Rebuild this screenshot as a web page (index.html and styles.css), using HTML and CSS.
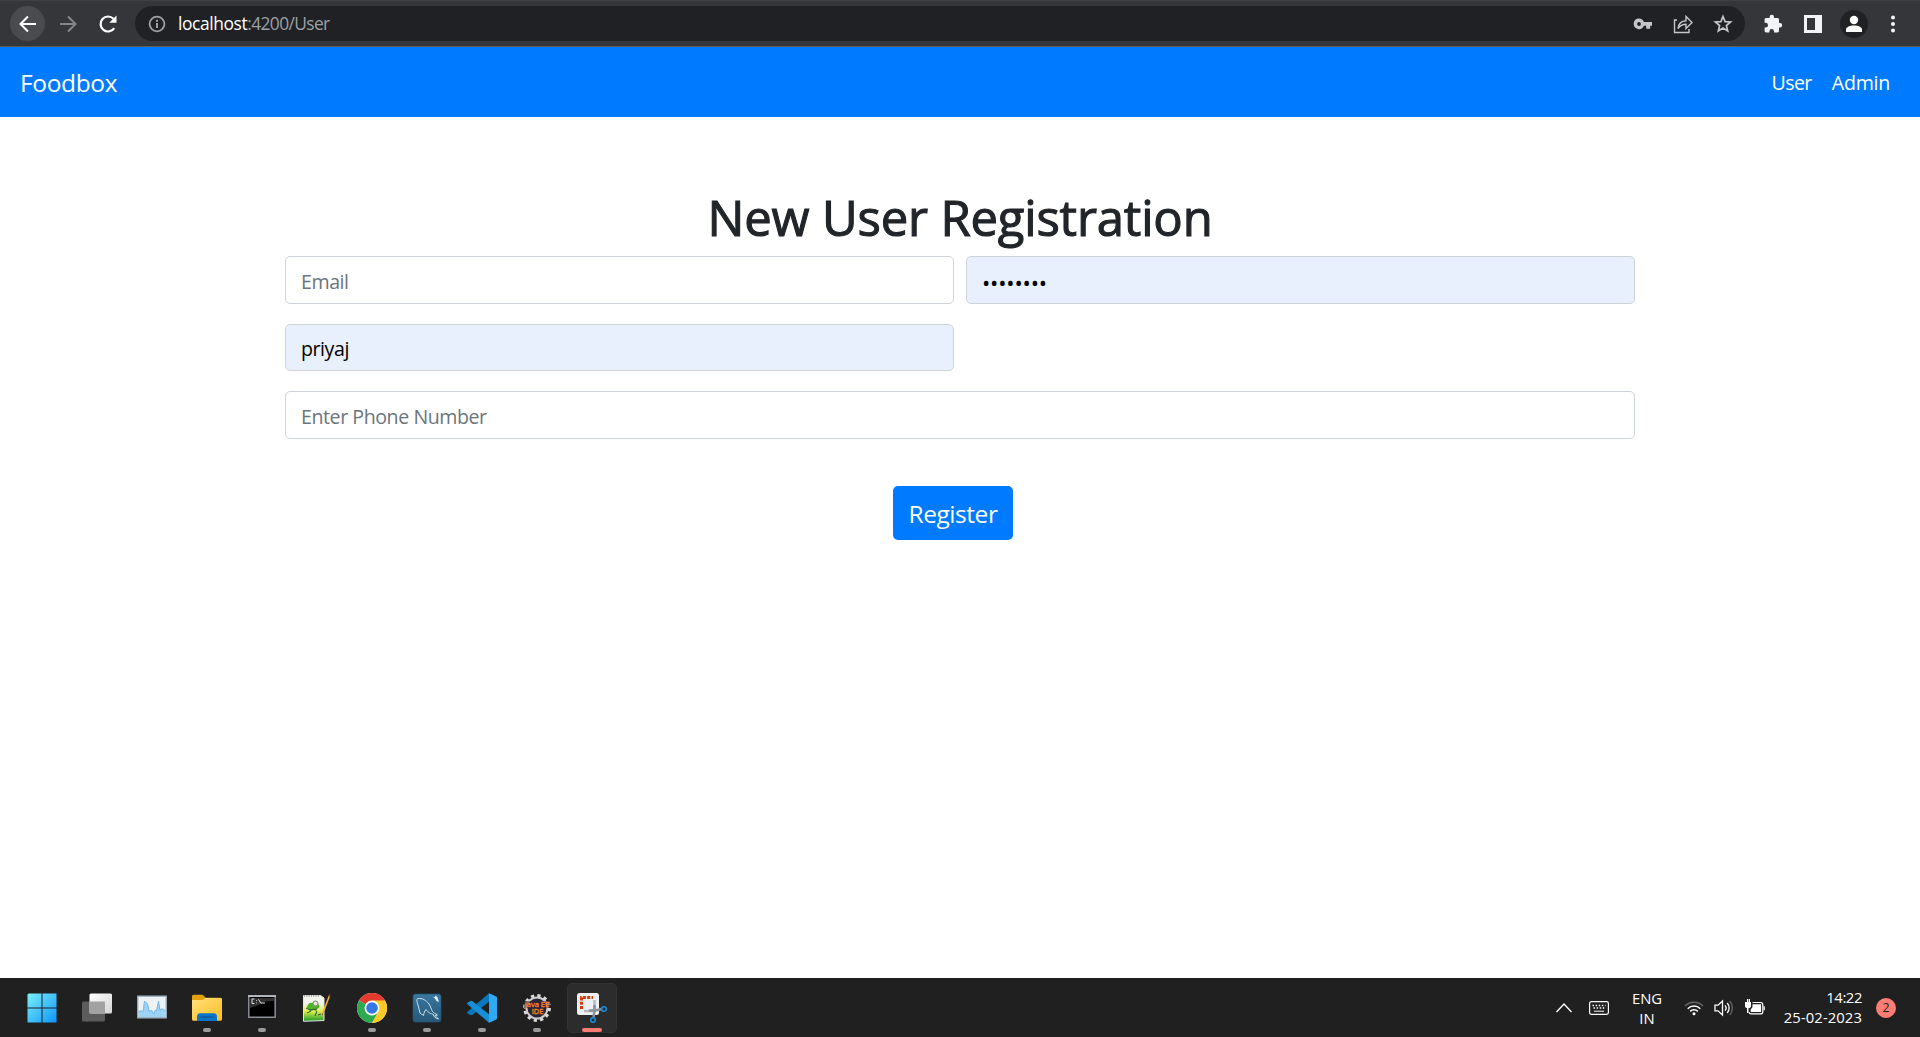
FILE: index.html
```
<!DOCTYPE html>
<html lang="en">
<head>
<meta charset="utf-8">
<title>Foodbox</title>
<link rel="stylesheet" href="styles.css">
</head>
<body>
<div class="screen">
  <header class="toolbar">
    <span class="tool tool-back"><svg width="20" height="20" viewBox="0 0 20 20" fill="none" stroke="#fff" stroke-width="2"><path d="M18 10H3M10 2.5 2.5 10l7.500 7.500"/></svg></span>
    <span class="tool"><svg width="20" height="20" viewBox="0 0 20 20" fill="none" stroke="#85868a" stroke-width="2"><path d="M2 10h15M10 2.500 17.500 10 10 17.500"/></svg></span>
    <span class="tool"><svg width="20" height="20" viewBox="0 0 20 20"><path d="M16.300 14.200A7.500 7.500 0 1 1 15.500 4.800" fill="none" stroke="#fff" stroke-width="2.200"/><path d="M18.500 1.500v7.200h-7.200z" fill="#fff"/></svg></span>
    <div class="omnibox">
      <svg class="info" width="18" height="18" viewBox="0 0 18 18" fill="none" stroke="#9aa0a6" stroke-width="1.800"><circle cx="9" cy="9" r="7.400"/><path d="M9 8v5M9 4.800v1.900" stroke-width="2"/></svg>
      <span class="url"><span class="host">localhost</span>:4200/User</span>
      <div class="omni-actions">
        <svg width="20" height="20" viewBox="0 0 20 20"><path d="M6 4.500a5.300 5.300 0 1 0 4.900 7.300h2.300v3h4v-3H19V8h-8.100A5.300 5.300 0 0 0 6 4.500zm0 3.600a1.900 1.900 0 1 1 0 3.800 1.900 1.900 0 0 1 0-3.800z" fill="#c4c6c9"/></svg>
        <svg width="20" height="20" viewBox="0 0 20 20" fill="none" stroke="#c4c6c9" stroke-width="1.400"><path d="M4 6H1.500v12.500H16V15"/><path d="M5 14.500c.5-4.800 3.500-7.500 8-7.800V2.500l6 6-6 6v-4.200c-3.500 0-6 1.300-8 4.200z"/></svg>
        <svg width="20" height="20" viewBox="0 0 20 20" fill="none" stroke="#c4c6c9" stroke-width="1.700"><path d="m10 2.500 2.100 5.100 5.500.4-4.200 3.600 1.300 5.400L10 14.100 5.300 17l1.300-5.400L2.400 8l5.500-.4z"/></svg>
      </div>
    </div>
    <div class="browser-actions">
      <svg width="20" height="20" viewBox="0 0 20 20" fill="#f1f3f4"><path d="M17 9h-1V5.600C16 4.700 15.300 4 14.400 4H11V3a2.200 2.200 0 0 0-4.400 0v1H3.200c-.9 0-1.600.7-1.600 1.600v3.200h1a2.400 2.400 0 0 1 0 4.800h-1v3.200c0 .9.700 1.600 1.600 1.600h3.200v-1a2.300 2.300 0 0 1 4.600 0v1h3.400c.9 0 1.600-.7 1.600-1.600v-3.400h1A2.200 2.200 0 0 0 17 9z"/></svg>
      <svg width="20" height="20" viewBox="0 0 20 20"><path fill-rule="evenodd" d="M1 1h18v18H1zM4 4v12h8V4z" fill="#f1f3f4"/></svg>
      <svg width="28" height="28" viewBox="0 0 28 28"><circle cx="14" cy="14" r="14" fill="#202124"/><circle cx="14" cy="10" r="4.200" fill="#fff"/><path d="M6 22v-2.500c0-2.500 4-4 8-4s8 1.500 8 4V22z" fill="#fff"/></svg>
      <svg width="20" height="20" viewBox="0 0 20 20" fill="#f1f3f4"><circle cx="10" cy="3.500" r="2"/><circle cx="10" cy="10" r="2"/><circle cx="10" cy="16.500" r="2"/></svg>
    </div>
  </header>

  <nav class="navbar">
    <a class="brand">Foodbox</a>
    <div class="links"><a class="link-user">User</a><a>Admin</a></div>
  </nav>

  <main class="page">
    <form class="form">
      <h1 class="title">New User Registration</h1>
      <div class="fields">
        <div class="field"><span class="placeholder">Email</span></div>
        <div class="field filled"><span class="password">••••••••</span></div>
        <div class="field filled"><span class="value">priyaj</span></div>
        <div class="field wide"><span class="placeholder">Enter Phone Number</span></div>
      </div>
      <div class="register"><span>Register</span></div>
    </form>
  </main>

  <footer class="taskbar">
    <div class="apps">
      <div class="app"><svg width="30" height="30" viewBox="0 0 30 30"><defs><linearGradient id="win" x1="0" y1="0" x2="30" y2="30" gradientUnits="userSpaceOnUse"><stop stop-color="#7cf2fd"/><stop offset=".5" stop-color="#43c2fb"/><stop offset="1" stop-color="#0b93fa"/></linearGradient></defs><path d="M1.500.5H14.500v14H.5v-13zM15.500.5h14v14h-14zM.5 15.500h14v14H.5zM15.500 15.500h14v14h-14z" fill="url(#win)"/></svg></div>
      <div class="app"><svg width="32" height="30" viewBox="0 0 32 30"><defs><linearGradient id="tv" x1="0" y1="0" x2="1" y2="1"><stop stop-color="#fff"/><stop offset="1" stop-color="#d5d5d5"/></linearGradient></defs><rect x="1" y="8.500" width="23" height="20" rx="1.500" fill="#5c5c5c"/><rect x="8.500" y=".5" width="22.500" height="20" rx="1.500" fill="url(#tv)"/><path d="M8.500 8.500H24v12H8.500z" fill="#a2a2a2"/></svg></div>
      <div class="app"><svg width="30" height="30" viewBox="0 0 30 30"><path d="M.8 3.300h28.400v21.400H.8z" fill="#eef2f5" stroke="#9fb2c0" stroke-width="1.400"/><path d="M1.500 19 4 17.500l2 1.500 1.500-11 3 3 2 8 2-2 2 4 2-4 1 1L21.500 8l1.500 9 2.500-1 3 2v6h-27z" fill="#9dd3f5"/><path d="m1.500 19 2.500-1.500 2 1.500 1.500-11 3 3 2 8 2-2 2 4 2-4 1 1L21.500 8l1.500 9 2.500-1 3 2" fill="none" stroke="#6db9ea" stroke-width="1"/></svg></div>
      <div class="app running"><svg width="30" height="30" viewBox="0 0 30 30"><defs><linearGradient id="fold" x1="0" y1="0" x2="1" y2="1"><stop stop-color="#ffe07b"/><stop offset="1" stop-color="#fdbd22"/></linearGradient></defs><path d="M0 3.500C0 2.500.7 1.700 1.700 1.700h9l3 3h14.600c1 0 1.700.8 1.700 1.700V16H0z" fill="#e3a008"/><path d="M0 7h11l2-2h15.500c.8 0 1.500.7 1.500 1.500v19.700c0 .8-.7 1.500-1.500 1.500h-27c-.8 0-1.500-.7-1.500-1.500z" fill="url(#fold)"/><path d="M5 28v-4.500c0-2 1.200-3.300 3-3.300h14c1.800 0 3 1.300 3 3.300V28z" fill="#0b76c7"/><path d="M9 24h12" stroke="#064b86" stroke-width="1.200" stroke-linecap="round"/></svg></div>
      <div class="app running"><svg width="30" height="30" viewBox="0 0 30 30"><path d="M1.800 3.300h26.400v20.900H1.800z" fill="#000" stroke="#8a9096" stroke-width="1.500"/><path d="M1 3h28" stroke="#c6ccd0" stroke-width="1.500"/><path d="M3 5h24v3c-7 0-13 1-15 4l-9 3z" fill="#303030"/><path d="M7.500 6H5v4.500h2.500M9.500 7v.8M9.500 9.500v.8M11.500 6.200l2.500 4.300M14 10h4" fill="none" stroke="#ddd" stroke-width="1"/></svg></div>
      <div class="app"><svg width="30" height="30" viewBox="0 0 30 30"><defs><linearGradient id="npp" x1="0" y1="0" x2="0" y2="1"><stop offset=".3" stop-color="#f4f6ed"/><stop offset=".62" stop-color="#dceb4f"/><stop offset="1" stop-color="#149c25"/></linearGradient></defs><path d="M1.500 2.500h17L22 5v22.500l-20.500.8z" fill="url(#npp)" stroke="#e5e8e5" stroke-width="1"/><path d="M2 3h16" stroke="#888" stroke-width="1.500" stroke-dasharray="1 1.300"/><path d="M5 15c0-4 3-6 6-5 1-3 6-2 5 1 3 2 1 5-2 5l1 3-3-2-4 1-1-2z" fill="#50b32b"/><circle cx="13.500" cy="10.500" r="2.500" fill="#e5e7df" stroke="#778269"/><path d="m4 15 4 2 7-1M5 20l4-2m4 5 2-5m1 4 3-1" stroke="#26582b" fill="none"/><path d="m20 20 6.500-17 1.500.6-6.500 17-1.500 1.400z" fill="#f6b51e"/><path d="m26.300 3 .8-1.800 1.600.6L28 3.600z" fill="#943b32"/><path d="m20 20.500 0 2 1.500-1.600z" fill="#624b29"/></svg></div>
      <div class="app running"><svg width="30" height="30" viewBox="0 0 30 30"><circle cx="15" cy="15" r="15" fill="#fff"/><path d="M15 15 2 7.500a15 15 0 0 1 26 0z" fill="#e33b2e"/><path d="M15 15 2 7.500A15 15 0 0 0 15 30l6.500-11.200z" fill="#2da94f"/><path d="M15 7.500h13A15 15 0 0 1 15 30l6.500-11.200z" fill="#fdc922"/><circle cx="15" cy="15" r="7.500" fill="#fff"/><circle cx="15" cy="15" r="5.800" fill="#3478e5"/></svg></div>
      <div class="app running"><svg width="30" height="30" viewBox="0 0 30 30"><defs><linearGradient id="sql" x1="0" y1="0" x2="0" y2="1"><stop stop-color="#3977a1"/><stop offset="1" stop-color="#275979"/></linearGradient></defs><rect x="1" y="1" width="28" height="28" rx="2.500" fill="url(#sql)" stroke="#235675" stroke-width=".7"/><path d="M8 20c-1-3-1-5-2-8S4 6 6 5.500c4-.5 8 1.500 11 5.500 2 3 2 5 3.500 7.500 1 1.500 3 2 5 3.500l-2.500.5 3.500 3.500c-3-.5-4.500-2-5.500-5-2 0-4.500-1-7-4.500-1.500 2-2 3-2.500 6-1-1-2-1-3.500-2.500z" fill="none" stroke="#d0e1ea" stroke-width="1"/><path d="m20.500 3.500 2 .8L24 2.500l1.500 2 1.500 4.500-2.500-1-1.500-2.500z" fill="#e5f0f5"/></svg></div>
      <div class="app running"><svg width="30" height="30" viewBox="0 0 30 30"><path d="M22 .2 29 3.500c.6.300 1 .8 1 1.500L22 8.700 5.200 22 3.700 22.200.5 20.300c-.5-.4-.5-1.200 0-1.600z" fill="#0878be"/><path d="M22 29.800 29 26.500c.6-.3 1-.8 1-1.500L22 21.300 5.200 8 3.700 7.800.5 9.700c-.5.400-.5 1.200 0 1.600z" fill="#168fd8"/><path d="M22 .2c.2.300 0 .8 0 1.300v27c0 .5.200 1 0 1.300L29 26.500c.6-.3 1-.8 1-1.500V5c0-.7-.4-1.200-1-1.500z" fill="#30a9f3"/></svg></div>
      <div class="app running"><svg width="30" height="30" viewBox="0 0 30 30"><circle cx="15" cy="15" r="12.300" fill="none" stroke="#dcdcdc" stroke-width="3.200" stroke-dasharray="3.200 3.240"/><circle cx="15" cy="15" r="10.500" fill="#292536" stroke="#cecece" stroke-width="2"/><path d="M2 8h26v7H2z" fill="#292536" opacity=".55"/><text x="15" y="14" text-anchor="middle" class="ide">Java EE</text><text x="15.500" y="20.500" text-anchor="middle" class="ide">IDE</text></svg></div>
      <div class="app active"><svg width="30" height="30" viewBox="0 0 30 30"><rect x="0" y="0" width="22" height="22" rx="2.500" fill="#eef1f4"/><path d="M4.500 16V4.500H16" fill="none" stroke="#d83b09" stroke-width="3" stroke-dasharray="3 1.300"/><path d="M17.500 7v11H7" fill="none" stroke="#b6bbc0" stroke-width="2.500"/><path d="M17.500 12v5.500L16.500 24M12 17.500h6L25 16" fill="none" stroke="#899199" stroke-width="2.500"/><circle cx="27" cy="16" r="2.300" fill="none" stroke="#168ddd" stroke-width="1.600"/><circle cx="16" cy="27" r="2.300" fill="none" stroke="#168ddd" stroke-width="1.600"/></svg></div>
    </div>
    <div class="tray">
      <svg class="chevron" width="18" height="18" viewBox="0 0 18 18" fill="none" stroke="#fff" stroke-width="1.300"><path d="m1.500 13 7.500-8 7.500 8"/></svg>
      <svg class="keyboard" width="20" height="14" viewBox="0 0 20 14" fill="none" stroke="#fff"><rect x=".6" y=".6" width="18.800" height="12.800" rx="1.800" stroke-width="1.200"/><path d="M3.500 4.500h13M4.500 7h12" stroke-width="1.400" stroke-dasharray="1.500 1.600"/><path d="M5 10.200h10"/></svg>
      <div class="lang"><span>ENG</span><span>IN</span></div>
      <div class="status">
        <svg width="20" height="18" viewBox="0 0 20 18" fill="none" stroke="#fff" stroke-width="1.500"><path d="M1 7a12.700 12.700 0 0 1 18 0" stroke="#66676a"/><path d="M3.700 9.700a8.900 8.900 0 0 1 12.600 0M6.200 12.400a5.400 5.400 0 0 1 7.600 0"/><circle cx="10" cy="14.800" r="1.500" fill="#fff" stroke="none"/></svg>
        <svg width="20" height="18" viewBox="0 0 20 18" fill="none" stroke="#fff" stroke-width="1.300"><path d="M1 6.200h3L8.500 2v14L4 11.800H1z"/><path d="M11 6.300a4.200 4.200 0 0 1 0 5.400M13.200 4a7.500 7.500 0 0 1 0 10"/><path d="M15.700 2a10.500 10.500 0 0 1 0 14" stroke="#66676a"/></svg>
        <svg width="22" height="18" viewBox="0 0 22 18"><path d="M3 0v3H1v4c0 1.500 1 2 2 2v5h1.500V9c1.300 0 2.500-.6 2.500-2V3H6V0H4.800v3h-.6V0z" fill="#fff"/><path d="M8.500 3.500h8c1.300 0 2.300 1 2.300 2.200v7c0 1.200-1 2.200-2.300 2.200H7c-1 0-1.800-.6-2-1.700" fill="none" stroke="#fff" stroke-width="1.200"/><path d="M8.500 5.300h8.600v7.800H6.700V10c1.200-.5 1.800-1.500 1.800-3z" fill="#fff"/><path d="M19.500 7.200h1.300v4h-1.300z" fill="#fff"/></svg>
      </div>
      <div class="clock"><span class="time">14:22</span><span class="date">25-02-2023</span></div>
      <span class="badge">2</span>
    </div>
  </footer>
</div>
</body>
</html>
```
FILE: styles.css
```
* { box-sizing: border-box; }
body { margin: 0; font-family: "Open Sans", "Noto Sans", sans-serif; background: #fff; }
svg { display: block; flex: none; }

.screen { display: flex; flex-direction: column; height: 1037px; width: 1920px; overflow: hidden; }

/* Browser toolbar */
.toolbar { flex: none; display: flex; align-items: center; height: 47px; padding: 0 0 0 10px; background: #35363a; border-bottom: 1px solid #5b5c5f; border-top: 1px solid #3f4044; }
.tool { flex: none; display: flex; align-items: center; justify-content: center; width: 35px; height: 35px; margin-right: 5px; border-radius: 50%; }
.tool-back { background: #4a4b4f; }
.omnibox { flex: none; display: flex; align-items: center; width: 1610px; height: 35px; margin-left: 5px; padding: 0 12px 0 13px; border-radius: 18px; background: #202124; }
.info { margin-right: 12px; }
.url { font-size: 17.4px; letter-spacing: -0.62px; color: #9aa0a6; line-height: 35px; }
.host { color: #fff; letter-spacing: -0.4px; }
.omni-actions { display: flex; gap: 20px; margin-left: auto; }
.browser-actions { display: flex; align-items: center; margin-left: 18px; }
.browser-actions svg:nth-child(2) { margin-left: 20px; }
.browser-actions svg:nth-child(3) { margin-left: 17px; }
.browser-actions svg:nth-child(4) { margin-left: 15px; }

/* Site navigation */
.navbar { flex: none; display: flex; align-items: center; justify-content: space-between; height: 70px; padding: 0 30px 0 20px; background: #007bff; color: #fff; }
.brand { font-size: 24.5px; letter-spacing: -0.35px; }
.links { display: flex; gap: 20px; font-size: 19.6px; letter-spacing: -0.25px; }
.link-user { letter-spacing: -0.6px; }

/* Registration form */
.page { flex: 1; padding-top: 69px; }
.form { width: 1350px; margin: 0 auto; }
.title { margin: 0 0 10px; padding-top: 1px; height: 60px; font-size: 49px; font-weight: 500; letter-spacing: -0.17px; line-height: 60px; text-align: center; color: #212529; -webkit-text-stroke: 1.1px #212529; }
.fields { display: grid; grid-template-columns: 1fr 1fr; gap: 20px 12px; }
.field { display: flex; align-items: center; height: 47.5px; padding: 3px 15px 0; border: 1px solid #ced4da; border-radius: 5px; font-size: 19.6px; letter-spacing: -0.44px; background: #fff; }
.filled { background: #e8f0fe; color: #000; }
.wide { grid-column: 1 / -1; }
.placeholder { color: #6c757d; }
.password { padding-top: 2px; font-size: 22px; letter-spacing: -0.15px; }
.register { display: flex; align-items: center; justify-content: center; width: 120px; height: 54px; margin: 47px 0 0 608px; padding-top: 2px; border-radius: 5px; background: #007bff; color: #fff; font-size: 24.5px; letter-spacing: -0.45px; }

/* Taskbar */
.taskbar { flex: none; display: flex; align-items: center; justify-content: space-between; height: 59px; padding: 0 24px 0 17px; background: #202021; color: #fff; }
.apps { display: flex; gap: 5px; }
.app { position: relative; display: flex; align-items: center; justify-content: center; width: 50px; height: 50px; border-radius: 5px; }
.running::after, .active::after { content: ""; position: absolute; bottom: 1px; width: 8px; height: 4px; border-radius: 2px; background: #9b9b9b; }
.active { background: #2c2c2d; border: 1px solid #333; }
.active::after { bottom: 0; width: 20px; background: #ff7d72; }
.ide { font: 7.5px "Open Sans", sans-serif; fill: #f0821e; stroke: #f0821e; stroke-width: .35px; }
.tray { display: flex; align-items: center; font-size: 14.8px; line-height: 20px; }
.chevron { margin-right: 16px; }
.keyboard { margin-right: 23px; }
.lang { display: flex; flex-direction: column; align-items: center; width: 30px; margin-right: 22px; }
.status { display: flex; gap: 10px; }
.clock { display: flex; flex-direction: column; align-items: flex-end; width: 96px; margin-right: 14px; padding-bottom: 2px; }
.time { letter-spacing: -0.4px; }
.date { letter-spacing: 0.1px; }
.badge { display: flex; align-items: center; justify-content: center; width: 20px; height: 20px; border-radius: 50%; background: #ff7d72; color: #222; font-size: 12.5px; }
```
